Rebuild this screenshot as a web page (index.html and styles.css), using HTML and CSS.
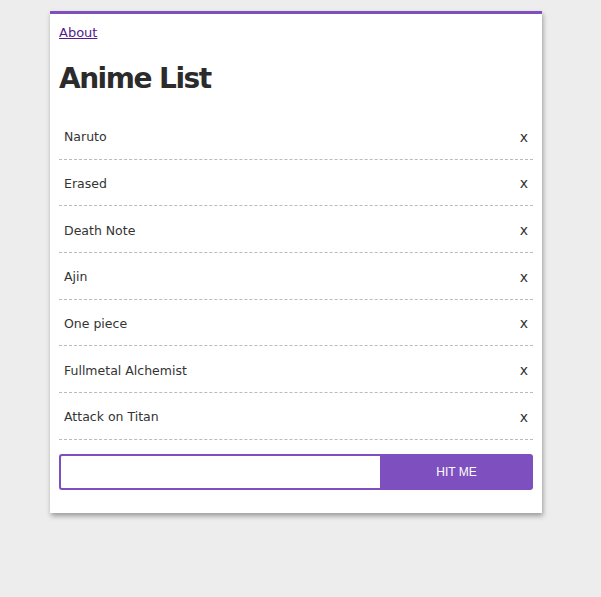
FILE: index.html
```html
<!DOCTYPE html>
<html>
<head>
<meta charset="utf-8">
<link rel="stylesheet" href="styles.css">
</head>
<body>
<div class="card">
  <a class="about" href="#">About</a>
  <h1 class="title">Anime List</h1>
  <ul class="list">
    <li class="item"><span>Naruto</span><span class="remove">x</span></li>
    <li class="item"><span>Erased</span><span class="remove">x</span></li>
    <li class="item"><span>Death Note</span><span class="remove">x</span></li>
    <li class="item"><span>Ajin</span><span class="remove">x</span></li>
    <li class="item"><span>One piece</span><span class="remove">x</span></li>
    <li class="item"><span>Fullmetal Alchemist</span><span class="remove">x</span></li>
    <li class="item"><span>Attack on Titan</span><span class="remove">x</span></li>
  </ul>
  <form class="add">
    <input class="field" type="text">
    <button class="btn" type="button">HIT ME</button>
  </form>
</div>
</body>
</html>
```
FILE: styles.css
```css
html, body {
  margin: 0;
  background: #ededed;
}
body {
  min-height: 597px;
  box-sizing: border-box;
  padding: 11px 0 40px 50px;
  font-family: "DejaVu Sans", Verdana, sans-serif;
  color: #333;
}
.card {
  width: 492px;
  box-sizing: border-box;
  background: #fff;
  border-top: 3px solid #7e4fbf;
  box-shadow: 1px 3px 5px rgba(0,0,0,0.35);
  padding: 8px 9px 23px;
}
.about {
  display: inline-block;
  font-size: 13px;
  line-height: 18px;
  color: #551a8b;
}
.title {
  margin: 20px 0 17px;
  font-size: 28px;
  line-height: 34px;
  letter-spacing: -1.5px;
  color: #2b2b2b;
}
.list {
  list-style: none;
  margin: 0;
  padding: 0;
}
.item {
  display: flex;
  justify-content: space-between;
  align-items: center;
  padding: 2px 5px 0;
  box-sizing: content-box;
  height: 43.67px;
  border-bottom: 1px dashed #bbb;
  font-size: 12.5px;
}
.remove {
  font-size: 14px;
}
.add {
  display: flex;
  margin: 14px 0 0;
  height: 36px;
}
.field {
  flex: 0 0 321px;
  box-sizing: border-box;
  margin: 0;
  border: 2px solid #7e4fbf;
  border-right: 0;
  border-radius: 3px 0 0 3px;
  outline: none;
}
.btn {
  flex: 1;
  margin: 0;
  border: 0;
  border-radius: 0 3px 3px 0;
  background: #7e4fbf;
  color: #fff;
  font-family: "Liberation Sans", Arial, sans-serif;
  font-size: 12px;
}
```
